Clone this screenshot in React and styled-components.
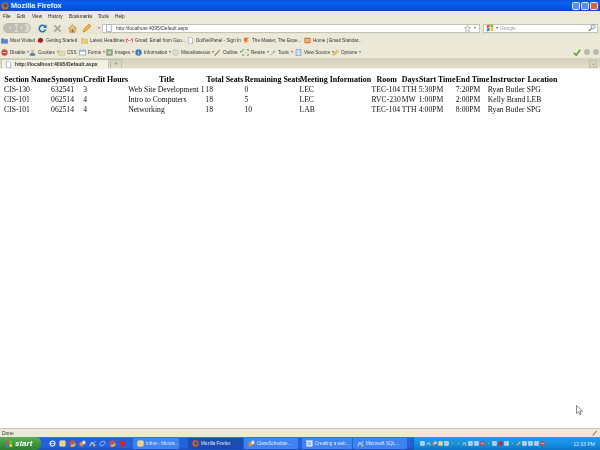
import React from "react";
import styled, { createGlobalStyle } from "styled-components";

const Global = createGlobalStyle`
  html, body { margin: 0; padding: 0; background: #fff; }
  * { box-sizing: border-box; }
`;

const Desktop = styled.div`
  position: relative;
  width: 600px;
  height: 450px;
  overflow: hidden;
  display: flex;
  flex-direction: column;
  font-family: "Liberation Sans", Arial, sans-serif;
  filter: blur(0.28px);
`;

const TitleBar = styled.div`
  height: 11px;
  flex: none;
  display: flex;
  align-items: center;
  padding: 0 2px 0 1px;
  gap: 1px;
  color: #f2f6ff;
  font-size: 7.3px;
  font-weight: 700;
  background: linear-gradient(#0a4fd8 0, #0a63ee 20%, #0456e4 60%, #0a49c8 100%);
`;
const TitleText = styled.span`flex: 1; padding-left: 1px;`;
const WinButton = styled.span`
  width: 8px;
  height: 8px;
  border: 1px solid #dfe8fb;
  border-radius: 1.5px;
  background: ${p => (p.$close ? "#d9603a" : "#5a8cf0")};
`;

const MenuBar = styled.div`
  height: 11px;
  flex: none;
  display: flex;
  align-items: center;
  background: #ece9d8;
  color: #222;
  font-size: 4.7px;
  padding-left: 3px;
`;
const MenuItem = styled.span`width: ${p => p.$w}px;`;

const NavBar = styled.div`
  height: 12px;
  flex: none;
  display: flex;
  align-items: center;
  background: linear-gradient(#ecead9, #e6e3d0);
  padding-left: 3px;
`;
const BackPill = styled.div`
  width: 28px;
  height: 10px;
  flex: none;
  border-radius: 5px;
  background: #d8d6cc;
  border: 1px solid #bab8ae;
  display: flex;
  align-items: center;
  gap: 1px;
`;
const PillButton = styled.span`
  width: ${p => p.$w}px;
  height: 8px;
  border-radius: 4px;
  background: #bebcb3;
  color: #f5f5f0;
  font-size: 7px;
  line-height: 7px;
  text-align: center;
`;
const Caret = styled.span`
  flex: none;
  width: 0;
  height: 0;
  border-left: 1.500px solid transparent;
  border-right: 1.500px solid transparent;
  border-top: 2px solid #666;
`;
const NavIcons = styled.div`
  width: 71px;
  flex: none;
  display: flex;
  align-items: center;
  justify-content: space-between;
  padding: 0 2px 0 7px;
`;
const UrlBox = styled.div`
  width: 378px;
  height: 9px;
  flex: none;
  background: #fff;
  border: 1px solid #c4c2b4;
  display: flex;
  align-items: center;
  gap: 3px;
  color: #333;
  font-size: 4.9px;
  padding: 0 3px 0 2px;
`;
const UrlText = styled.span`flex: 1;`;
const SearchBox = styled(UrlBox)`
  width: 115px;
  margin-left: 3px;
  color: #999;
  padding-right: 1px;
  gap: 2px;
`;

const ToolRow = styled.div`
  height: 12px;
  flex: none;
  display: flex;
  align-items: center;
  background: #ece9d8;
  color: #333;
  font-size: 4.65px;
  padding-left: 1px;
`;
const ToolItem = styled.span`
  width: ${p => p.$w}px;
  flex: none;
  display: flex;
  align-items: center;
  gap: 2px;
  white-space: nowrap;
`;
const Right = styled.div`
  margin-left: auto;
  display: flex;
  align-items: center;
  gap: 3px;
  padding-right: 1px;
`;
const Dot = styled.span`
  width: 6px;
  height: 6px;
  border-radius: 50%;
  background: #bcbab0;
`;

const TabStrip = styled.div`
  height: 11px;
  flex: none;
  display: flex;
  align-items: flex-end;
  padding-left: 1px;
  background: linear-gradient(#d2cfbb, #e0ddcc);
  border-bottom: 1px solid #f3f1e6;
`;
const Tab = styled.div`
  width: 108px;
  height: 9px;
  background: #f3f1e4;
  border: 1px solid #c9c6b4;
  border-bottom: none;
  display: flex;
  align-items: center;
  gap: 3px;
  padding-left: 3px;
  font-size: 5.2px;
  font-weight: 700;
  color: #333;
`;
const NewTab = styled.div`
  width: 12px;
  height: 9px;
  margin-left: 1px;
  border: 1px solid #c0bdab;
  border-bottom: none;
  color: #888;
  font-size: 7px;
  line-height: 7px;
  text-align: center;
`;
const ScrollTab = styled.div`
  margin-left: auto;
  width: 8px;
  height: 8px;
  background: #d6d3c2;
  border: 1px solid #c0bdab;
  margin-right: 3px;
  color: #777;
  font-size: 6px;
  line-height: 5px;
  text-align: center;
`;

const Content = styled.main`
  flex: 1;
  background: #fff;
  padding: 5px 0 0 4px;
`;
const Table = styled.table`
  border-collapse: collapse;
  table-layout: fixed;
  width: 554px;
  font-family: "Liberation Serif", "Times New Roman", serif;
  font-size: 7.65px;
  color: #111;
  th, td { padding: 0; height: 10px; white-space: nowrap; overflow: visible; }
  th { font-size: 7.95px; font-weight: 700; text-align: center; color: #000; }
  td { text-align: left; }
`;

const StatusBar = styled.div`
  height: 9px;
  flex: none;
  background: #ece9d8;
  border-top: 1px solid #c9c5b2;
  display: flex;
  align-items: center;
  justify-content: space-between;
  padding: 0 2px;
  color: #333;
  font-size: 4.9px;
`;

const TaskBar = styled.div`
  height: 13px;
  flex: none;
  display: flex;
  align-items: center;
  color: #e6eeff;
  font-size: 4.6px;
  background: linear-gradient(#2f7bec 0, #245edb 15%, #2662de 70%, #1c4fc0 100%);
`;
const StartButton = styled.div`
  width: 41px;
  height: 13px;
  flex: none;
  display: flex;
  align-items: center;
  gap: 2px;
  padding-left: 5px;
  color: #fff;
  font-size: 8px;
  font-weight: 700;
  font-style: italic;
  background: linear-gradient(#5fae5d, #3c9a3c 50%, #2f7f32);
  border-radius: 0 5px 5px 0;
`;
const Quick = styled.div`
  width: 92px;
  flex: none;
  display: flex;
  gap: 3px;
  padding-left: 8px;
`;
const TaskBtn = styled.div`
  width: ${p => p.$w}px;
  margin-right: ${p => p.$m}px;
  height: 11px;
  flex: none;
  display: flex;
  align-items: center;
  gap: 2px;
  padding-left: 4px;
  white-space: nowrap;
  overflow: hidden;
  border-radius: 1px;
  background: ${p => (p.$active ? "#1e4bb0" : "#3f83f0")};
`;
const Tray = styled.div`
  margin-left: auto;
  width: 187px;
  height: 13px;
  flex: none;
  display: flex;
  align-items: center;
  gap: 1px;
  padding-left: 6px;
  background: linear-gradient(#1ea0ee, #138bdf 60%, #0f76cb);
  border-left: 1px solid #0e5fb5;
`;
const Clock = styled.span`
  margin-left: auto;
  padding-right: 5px;
  font-size: 5px;
`;

const Cursor = styled.svg`
  position: absolute;
  left: 576px;
  top: 405px;
`;

const Tiny = styled.svg`
  flex: none;
  display: block;
`;

const shapes = {
  page: <path d="M2 .5h4l2 2v7H2z" fill="#fff" stroke="#7c9ac4" strokeWidth=".9" />,
  source: <path d="M1.500.5h7v9h-7z" fill="#cfe0f4" stroke="#6d97c8" />,
  folderBlue: <path d="M.5 2.500h3.500l1 1h4.500v5.500H.5z" fill="#5a86c8" stroke="#3f66a8" strokeWidth=".6" />,
  folder: <path d="M.5 2.500h3.500l1 1h4.500v5.500H.5z" fill="#ecd070" stroke="#b8963c" strokeWidth=".6" />,
  redhat: <path d="M1 6c0-3 2-5 4-5s4 2 4 4c0 1-1 2-2 2l-1 2-2-1-3-1z" fill="#a5222a" />,
  gmail: <g><path d="M.5 2h9v6.500h-9z" fill="#fff" stroke="#bbb" strokeWidth=".5" /><path d="M1 8V2.500L5 6l4-3.500V8" fill="none" stroke="#d8433a" strokeWidth="1.300" /></g>,
  z: <path d="M1.500 1h7L5 5h3.500L2 9.500 4 6H1z" fill="#e8761c" />,
  mail: <g><rect x=".5" y="1" width="9" height="8" rx="1" fill="#dc7a2a" /><path d="M2 4h6M2 6h6" stroke="#fff" /></g>,
  disable: <g><circle cx="5" cy="5" r="4.500" fill="#d2493f" /><path d="M2.500 5h5" stroke="#f4d0c8" strokeWidth="1.500" /></g>,
  cookies: <g><circle cx="5" cy="3" r="2.200" fill="#c9b89a" /><path d="M1 9.500c0-3 2-4 4-4s4 1 4 4z" fill="#5f78b8" /></g>,
  css: <path d="M.5 2.500h3.500l1 1h4.500v5.500H.5z" fill="#e4dfb2" stroke="#a8a27a" strokeWidth=".6" />,
  forms: <g><rect x=".5" y="1.500" width="9" height="7" fill="#fff" stroke="#7e9ccb" /><path d="M.5 3h9" stroke="#7e9ccb" strokeWidth="1.500" /></g>,
  images: <g><rect x="1" y="1" width="8" height="8" fill="#8aa67e" stroke="#6f8a66" strokeWidth=".6" /><path d="M3 3h4v4H3z" fill="#c6d3bc" /></g>,
  info: <g><circle cx="5" cy="5" r="4.500" fill="#3e78b8" /><path d="M5 2.500v1M5 4.500v3.500" stroke="#fff" /></g>,
  misc: <circle cx="5" cy="5" r="4.300" fill="#dcdad0" stroke="#aaa89e" strokeWidth=".6" />,
  outline: <path d="M1 9.500L8 1.500" stroke="#8e8a60" strokeWidth="1.800" />,
  resize: <g fill="#4f9f52"><path d="M.5.500h3l-3 3zM9.500.500v3l-3-3zM.5 9.500v-3l3 3zM9.500 9.500h-3l3-3z" /><path d="M4 4h2v2H4z" fill="#bbb" /></g>,
  wrench: <path d="M1.500 8.500L6 4c-.5-2 1-3.500 3-3L7.500 2.500 8 3.500l1.500-1c.5 2-1.500 3.500-3 3L2.500 9.500z" fill="#a9b0ba" />,
  options: <path d="M1 9l1.500-3 5-5 2 2-5 5z" fill="#e6c84c" stroke="#b89a2c" strokeWidth=".6" />,
  ie: <g><circle cx="5" cy="5" r="3.500" fill="none" stroke="#e6f0ff" strokeWidth="1.600" /><path d="M2 5h6" stroke="#e6f0ff" /></g>,
  smile: <rect x="1" y="1" width="8" height="8" rx="1.500" fill="#f2d26a" stroke="#fff" strokeWidth=".6" />,
  chrome: <g><circle cx="5" cy="5" r="4.500" fill="#d94b3a" /><path d="M5 5L9.500 5A4.500 4.500 0 0 1 2 8.400z" fill="#e8c23c" /><circle cx="5" cy="5" r="1.800" fill="#3d7fe0" /></g>,
  tools: <g><path d="M1 3h5v6H1z" fill="#e08a3c" /><path d="M5 1h4v5H5z" fill="#dfe6f2" /></g>,
  sql: <g><path d="M1 9l3-6 1 3 4-4" fill="none" stroke="#e6eef8" strokeWidth="1.200" /><path d="M6 6h3v3H6z" fill="#e6c84c" /></g>,
  swirl: <path d="M2 8c-2-4 3-7 6-6M8 2c2 4-3 7-6 6" fill="none" stroke="#8ec2f4" strokeWidth="1.400" />,
  red: <circle cx="5" cy="5" r="4.300" fill="#c02a30" />,
  doc: <g><rect x="1" y="1" width="8" height="8" fill="#dbe6f7" stroke="#fff" strokeWidth=".5" /><path d="M3 4h4M3 6h4" stroke="#3f6fc0" /></g>,
};

const Glyph = ({ n, s = 7 }) => (
  <Tiny width={s} height={s} viewBox="0 0 10 10">{shapes[n]}</Tiny>
);

const Reload = () => (
  <svg width="9" height="9" viewBox="0 0 10 10">
    <path d="M8 3a3.600 3.600 0 1 0 .5 3" fill="none" stroke="#1e73c8" strokeWidth="1.800" />
    <path d="M9.500.5v4h-4z" fill="#1e73c8" />
  </svg>
);
const Stop = () => (
  <svg width="9" height="9" viewBox="0 0 10 10">
    <path d="M1.500 1.500l7 7M8.500 1.500l-7 7" stroke="#a9a89e" strokeWidth="2" />
  </svg>
);
const Home = () => (
  <svg width="9" height="9" viewBox="0 0 10 10">
    <path d="M5 .8L.5 5h1.500v4.200h6V5h1.500z" fill="#e8c773" stroke="#a8803c" strokeWidth=".7" />
    <path d="M4 6h2v3.200H4z" fill="#b5533a" />
  </svg>
);
const Pencil = () => (
  <svg width="10" height="10" viewBox="0 0 10 10">
    <path d="M1 9l1-3 5-5 2 2-5 5z" fill="#efb23a" stroke="#b9772a" strokeWidth=".6" />
  </svg>
);
const Star = () => (
  <svg width="7" height="7" viewBox="0 0 10 10">
    <path d="M5 .8l1.300 3h3.200L7 6l.8 3.300L5 7.500 2.200 9.300 3 6 .5 3.800h3.200z" fill="none" stroke="#999" />
  </svg>
);
const Lens = () => (
  <svg width="8" height="8" viewBox="0 0 10 10">
    <circle cx="6.500" cy="3.500" r="2.600" fill="#dbe9f7" stroke="#7f97ad" />
    <path d="M4.500 5.500L1 9" stroke="#8c6d3a" strokeWidth="1.500" />
  </svg>
);
const Check = () => (
  <svg width="8" height="7" viewBox="0 0 10 9">
    <path d="M1 5l3 3 5-7" fill="none" stroke="#5a9e2f" strokeWidth="2" />
  </svg>
);
const Fox = ({ s = 7 }) => (
  <svg width={s} height={s} viewBox="0 0 10 10">
    <circle cx="5" cy="5" r="4.500" fill="#d8651c" />
    <circle cx="5.500" cy="4.500" r="2.500" fill="#35529b" />
  </svg>
);
const Flag = () => (
  <svg width="8" height="8" viewBox="0 0 10 10">
    <path d="M1 1.500l3.500-1v3.700l-3.500.8z" fill="#e2512b" />
    <path d="M5.500.5L9 1v3.700l-3.500-.5z" fill="#6fbf3c" />
    <path d="M1 5.500l3.500-.8v3.800L1 9.500z" fill="#3d7fe0" />
    <path d="M5.500 4.700L9 5.200V9l-3.500-.5z" fill="#f0c52e" />
  </svg>
);

const menus = [["File", 14], ["Edit", 15], ["View", 16], ["History", 21], ["Bookmarks", 29], ["Tools", 17], ["Help", 20]];

const bookmarks = [
  ["Most Visited", 36, "folderBlue"],
  ["Getting Started", 44, "redhat"],
  ["Latest Headlines", 45, "folder"],
  ["Gmail: Email from Goo...", 61, "gmail"],
  ["DotNetPanel - Sign In", 56, "page"],
  ["The Master, The Expe...", 61, "z"],
  ["Home | Email Standar...", 70, "mail"],
];

const tools = [
  ["Disable", 28, "disable"],
  ["Cookies", 29, "cookies"],
  ["CSS", 21, "css"],
  ["Forms", 27, "forms"],
  ["Images", 29, "images"],
  ["Information", 37, "info"],
  ["Miscellaneous", 42, "misc"],
  ["Outline", 28, "outline"],
  ["Resize", 27, "resize"],
  ["Tools", 26, "wrench"],
  ["View Source", 37, "source"],
  ["Options", 36, "options"],
];

const cols = [47, 32, 45, 77, 39, 55, 72, 30, 17, 37, 32, 39, 31];
const heads = ["Section Name", "Synonym", "Credit Hours", "Title", "Total Seats", "Remaining Seats", "Meeting Information", "Room", "Days", "Start Time", "End Time", "Instructor", "Location"];

const rows = [
  ["CIS-130", "632541", "3", "Web Site Development 1", "18", "0", "LEC", "TEC-104", "TTH", "5:30PM", "7:20PM", "Ryan Butler", "SPG"],
  ["CIS-101", "062514", "4", "Intro to Computers", "18", "5", "LEC", "RVC-230", "MW", "1:00PM", "2:00PM", "Kelly Brand", "LEB"],
  ["CIS-101", "062514", "4", "Networking", "18", "10", "LAB", "TEC-104", "TTH", "4:00PM", "8:00PM", "Ryan Butler", "SPG"],
];

const quick = ["ie", "smile", "chrome", "tools", "sql", "swirl", "chrome", "red"];
const tray = ["doc", "sql", "tools", "smile", "doc", "resize", "resize", "sql", "doc", "doc", "disable", "resize", "doc", "red", "doc", "resize", "options", "doc", "doc", "doc", "disable"];

export default function App() {
  return (
    <Desktop>
      <Global />
      <TitleBar>
        <Fox s={8} />
        <TitleText>Mozilla Firefox</TitleText>
        <WinButton />
        <WinButton />
        <WinButton $close />
      </TitleBar>
      <MenuBar>
        {menus.map(([m, w]) => <MenuItem key={m} $w={w}>{m}</MenuItem>)}
      </MenuBar>
      <NavBar>
        <BackPill>
          <PillButton $w={12}>‹</PillButton>
          <PillButton $w={9}>›</PillButton>
        </BackPill>
        <NavIcons>
          <Reload /><Stop /><Home /><Pencil /><Caret />
        </NavIcons>
        <UrlBox>
          <Glyph n="page" s={8} />
          <UrlText>http://localhost:4095/Default.aspx</UrlText>
          <Star />
          <Caret />
        </UrlBox>
        <SearchBox>
          <Flag />
          <Caret />
          <UrlText>Google</UrlText>
          <Lens />
        </SearchBox>
      </NavBar>
      <ToolRow>
        {bookmarks.map(([t, w, n]) => (
          <ToolItem key={t} $w={w}><Glyph n={n} />{t}</ToolItem>
        ))}
      </ToolRow>
      <ToolRow>
        {tools.map(([t, w, n]) => (
          <ToolItem key={t} $w={w}><Glyph n={n} />{t}<Caret /></ToolItem>
        ))}
        <Right><Check /><Dot /><Dot /></Right>
      </ToolRow>
      <TabStrip>
        <Tab><Glyph n="page" s={7} />http://localhost:4095/Default.aspx</Tab>
        <NewTab>+</NewTab>
        <ScrollTab>⌄</ScrollTab>
      </TabStrip>
      <Content>
        <Table>
          <colgroup>{cols.map((w, i) => <col key={i} width={w} />)}</colgroup>
          <thead>
            <tr>{heads.map(h => <th key={h}>{h}</th>)}</tr>
          </thead>
          <tbody>
            {rows.map((r, i) => (
              <tr key={i}>
                {r.map((c, j) => <td key={j}>{c}</td>)}
              </tr>
            ))}
          </tbody>
        </Table>
      </Content>
      <StatusBar>
        <span>Done</span>
        <Glyph n="outline" s={6} />
      </StatusBar>
      <TaskBar>
        <StartButton><Flag />start</StartButton>
        <Quick>{quick.map((n, i) => <Glyph key={i} n={n} />)}</Quick>
        <TaskBtn $w={46} $m={9}><Glyph n="smile" />Inbox - Micros...</TaskBtn>
        <TaskBtn $w={55} $m={1} $active><Fox s={7} />Mozilla Firefox</TaskBtn>
        <TaskBtn $w={54} $m={4}><Glyph n="tools" />ClassSchedule...</TaskBtn>
        <TaskBtn $w={50} $m={1}><Glyph n="doc" />Creating a web...</TaskBtn>
        <TaskBtn $w={54} $m={0}><Glyph n="sql" />Microsoft SQL...</TaskBtn>
        <Tray>
          {tray.map((n, i) => <Glyph key={i} n={n} s={5} />)}
          <Clock>12:33 PM</Clock>
        </Tray>
      </TaskBar>
      <Cursor width="7" height="11" viewBox="0 0 7 11">
        <path d="M.5.500v8l2-1.800 1.300 3 1.400-.6-1.300-2.900h2.600z" fill="#fff" stroke="#555" strokeWidth=".7" />
      </Cursor>
    </Desktop>
  );
}
